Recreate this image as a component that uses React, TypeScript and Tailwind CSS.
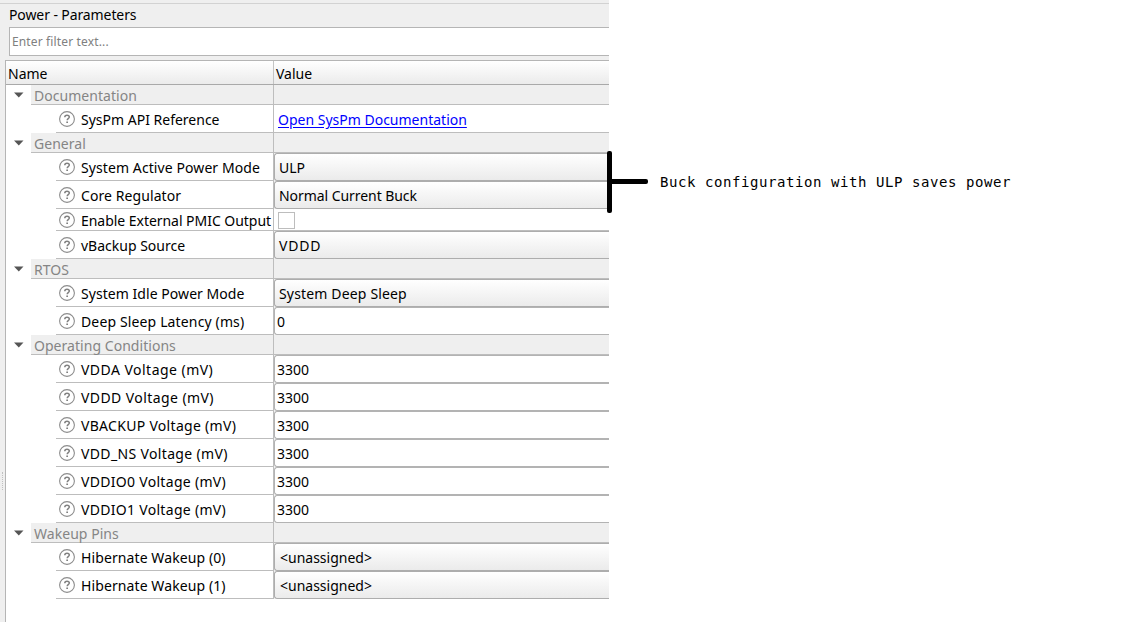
import type { ReactNode } from "react";

type Row = {
  label: string;
  value: string;
  kind: "link" | "combo" | "check" | "input" | "pin";
  tracking?: string;
  valueTracking?: string;
};
type Section = { title: string; rows: Row[] };

const sections: Section[] = [
  { title: "Documentation", rows: [{ label: "SysPm API Reference", value: "Open SysPm Documentation", kind: "link" }] },
  {
    title: "General",
    rows: [
      { label: "System Active Power Mode", value: "ULP", kind: "combo", tracking: "tracking-[0.09px]" },
      { label: "Core Regulator", value: "Normal Current Buck", kind: "combo", tracking: "tracking-[0.08px]", valueTracking: "tracking-[-0.06px]" },
      { label: "Enable External PMIC Output", value: "", kind: "check", tracking: "tracking-[-0.04px]" },
      { label: "vBackup Source", value: "VDDD", kind: "combo", valueTracking: "tracking-[0.8px]" },
    ],
  },
  {
    title: "RTOS",
    rows: [
      { label: "System Idle Power Mode", value: "System Deep Sleep", kind: "combo", tracking: "tracking-[0.05px]", valueTracking: "tracking-[0.16px]" },
      { label: "Deep Sleep Latency (ms)", value: "0", kind: "input", tracking: "tracking-[0.14px]" },
    ],
  },
  {
    title: "Operating Conditions",
    rows: [
      { label: "VDDA Voltage (mV)", value: "3300", kind: "input", tracking: "tracking-[0.47px]" },
      { label: "VDDD Voltage (mV)", value: "3300", kind: "input", tracking: "tracking-[0.42px]" },
      { label: "VBACKUP Voltage (mV)", value: "3300", kind: "input", tracking: "tracking-[0.3px]" },
      { label: "VDD_NS Voltage (mV)", value: "3300", kind: "input", tracking: "tracking-[0.35px]" },
      { label: "VDDIO0 Voltage (mV)", value: "3300", kind: "input", tracking: "tracking-[0.3px]" },
      { label: "VDDIO1 Voltage (mV)", value: "3300", kind: "input", tracking: "tracking-[0.3px]" },
    ],
  },
  {
    title: "Wakeup Pins",
    rows: [
      { label: "Hibernate Wakeup (0)", value: "<unassigned>", kind: "pin", tracking: "tracking-[0.1px]" },
      { label: "Hibernate Wakeup (1)", value: "<unassigned>", kind: "pin", tracking: "tracking-[0.1px]" },
    ],
  },
];

function HelpIcon() {
  return (
    <svg className="mr-1.5 h-4 w-4 shrink-0" viewBox="0 0 16 16" fill="none">
      <circle cx="8" cy="8" r="7.4" stroke="#8c8c8c" strokeWidth="1.1" />
      <path d="M5.8 6.2C5.8 4.9 6.7 4.2 8 4.2s2.3.7 2.3 1.9c0 1.5-2.1 1.6-2.1 3.1" stroke="#808080" strokeWidth="1.5" />
      <path d="M7.3 10.4h1.7V12H7.3z" fill="#808080" />
    </svg>
  );
}

function Value({ row }: { row: Row }): ReactNode {
  const text = <span className={row.valueTracking}>{row.value}</span>;
  if (row.kind === "link")
    return (
      <div className="flex h-full items-center border-b border-[#bdbdbd] pl-1 pt-0.5 text-[#0000ff]">
        <span className="underline underline-offset-2">{row.value}</span>
      </div>
    );
  if (row.kind === "check")
    return (
      <div className="flex h-full items-center border-b border-[#bdbdbd] pl-1">
        <div className="mt-0.5 h-[17px] w-[17px] border border-[#bdbdbd] bg-white" />
      </div>
    );
  if (row.kind === "input")
    return (
      <div className="flex h-full items-center rounded-l-[3px] border-y border-l border-[#b3b3b3] bg-white pl-0.5 pt-px">
        {text}
      </div>
    );
  return (
    <div
      className={`flex h-full items-center rounded-l-[3px] border-y border-l border-[#adadad] bg-linear-to-b from-white to-[#ebebeb] pt-px ${row.kind === "pin" ? "pl-[5px]" : "pl-1"}`}
    >
      {text}
    </div>
  );
}

function ParameterRow({ row }: { row: Row }) {
  return (
    <div className={`flex ${row.kind === "check" ? "h-[22px]" : "h-7"}`}>
      <div className="ml-[50px] flex w-[217px] shrink-0 items-center border-b border-[#bdbdbd] pl-[3px]">
        <HelpIcon />
        <span className={`pt-0.5 ${row.tracking ?? ""}`}>{row.label}</span>
      </div>
      <div className="min-w-0 flex-1 border-l border-[#bdbdbd]">
        <Value row={row} />
      </div>
    </div>
  );
}

function SectionHeader({ title }: { title: string }) {
  return (
    <div className="flex h-5">
      <div className="w-[25px] shrink-0 pl-2 pt-[7px]">
        <svg className="h-[6px] w-[10px]" viewBox="0 0 10 6">
          <path d="M0 .5h9.5L4.8 5.5z" fill="#555" />
        </svg>
      </div>
      <div className="flex w-[242px] shrink-0 items-center border-b border-[#bdbdbd] bg-[#efefef] pl-[3px] pt-0.5 text-[#858585]">
        <span className="tracking-[0.04px]">{title}</span>
      </div>
      <div className="flex-1 border-b border-l border-[#bdbdbd] bg-[#efefef]" />
    </div>
  );
}

export default function App() {
  return (
    <main className="flex h-[622px] w-[1125px] overflow-hidden bg-white font-['Noto_Sans','Open_Sans',sans-serif] text-[14px] leading-[18px] whitespace-nowrap text-black">
      <section className="flex w-[609px] shrink-0 flex-col bg-[#efefef]">
        <div className="h-[4px] border-b border-[#d2d2d2]" />
        <h1 className="h-[23px] pl-[9px] pt-0.5 tracking-[-0.1px]">Power - Parameters</h1>
        <div className="ml-[9px] flex h-[29px] shrink-0 items-center border-y border-l border-[#b5b5b5] bg-white pl-0.5 text-[12px] tracking-[0.14px] text-[#808080]">
          Enter filter text...
        </div>
        <div className="mt-1 flex min-h-0 flex-1">
          <div className="flex w-[5px] flex-col items-center pt-[412px]">
            <div className="h-[18px] border-l border-dotted border-[#c0c0c0]" />
          </div>
          <div className="min-w-0 flex-1 border-t border-l border-[#b5b5b5] bg-white">
            <div className="flex h-6 border-b border-[#a9a9a9] bg-linear-to-b from-white to-[#ebebeb]">
              <div className="w-[267px] pl-0.5 pt-1">Name</div>
              <div className="flex-1 border-l border-[#c4c4c4] pl-0.5 pt-1">Value</div>
            </div>
            {sections.map((section) => (
              <div key={section.title}>
                <SectionHeader title={section.title} />
                {section.rows.map((row) => (
                  <ParameterRow key={row.label} row={row} />
                ))}
              </div>
            ))}
          </div>
        </div>
      </section>
      <aside className="-ml-0.5 mt-[151px] flex h-[62px] items-center">
        <div className="z-10 h-full w-[5px] rounded-[2px] bg-black" />
        <div className="-ml-1 mb-px h-[5px] w-10 rounded-r-[2px] bg-black" />
        <p className="ml-3 font-['DejaVu_Sans_Mono',monospace] text-[14px] tracking-[0.57px]">
          Buck configuration with ULP saves power
        </p>
      </aside>
    </main>
  );
}
